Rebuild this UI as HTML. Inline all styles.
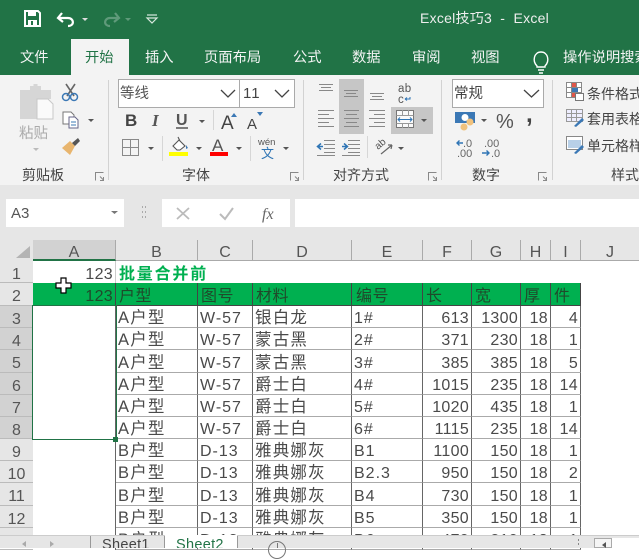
<!DOCTYPE html>
<html><head><meta charset="utf-8">
<style>
html,body{margin:0;padding:0}
body{width:639px;height:548px;overflow:hidden;position:relative;background:#fff;font-family:"Liberation Sans","Noto Sans CJK SC",sans-serif;color:#444}
.a{position:absolute}
.t{position:absolute;white-space:nowrap;line-height:18px}
.tab{top:49px;color:#f4f4f4;font-size:14.3px}
.lb{top:166px;font-size:14px;color:#444}
.s{font-size:14px;color:#444;left:587px}
table{border-collapse:separate;border-spacing:0;table-layout:fixed;position:absolute;left:33px;top:261px;width:606px;font-size:16.5px;color:#4a4a4a}
td{box-sizing:border-box;padding:4px 0 0 2px;border-right:1px solid #666;border-bottom:1px solid #aaa;white-space:nowrap;overflow:hidden;line-height:17px;letter-spacing:1.2px}
td.n{text-align:right;padding-right:2px;letter-spacing:.3px;font-size:16px}
td.l{letter-spacing:1px;font-size:16px}
td.e{border:0;padding:0}
td.x{border-right:0;border-bottom:0}
tr.g td.c{background:#00b050;border-color:#444;color:#1f4a2b;letter-spacing:.5px;font-size:16px;padding-left:3px}
.rh{position:absolute;left:0;width:33px;text-align:center;font-size:16px;color:#555;box-sizing:border-box;border-bottom:1px solid #bbb;line-height:27px;overflow:hidden}
.ch{position:absolute;top:240px;height:21px;text-align:center;font-size:16px;color:#555;line-height:26px;box-sizing:border-box;border-right:1px solid #aaa;border-bottom:1px solid #aaa;overflow:hidden}
</style></head><body>

<div class="a" style="left:0;top:0;width:639px;height:75px;background:#217346"></div>
<div class="a" style="left:71px;top:39px;width:58px;height:36px;background:#f3f3f3"></div>
<div class="a" style="left:0;top:75px;width:639px;height:110px;background:#f3f3f3"></div>
<div class="a" style="left:0;top:185px;width:639px;height:76px;background:#e6e6e6"></div>

<div class="t" style="left:420px;top:9px;color:#eee;font-size:14px;letter-spacing:.25px">Excel技巧3&nbsp; -&nbsp; Excel</div>
<div class="t tab" style="left:20px">文件</div>
<div class="t tab" style="left:85px;color:#217346">开始</div>
<div class="t tab" style="left:145px">插入</div>
<div class="t tab" style="left:204px">页面布局</div>
<div class="t tab" style="left:293px">公式</div>
<div class="t tab" style="left:352px">数据</div>
<div class="t tab" style="left:412px">审阅</div>
<div class="t tab" style="left:471px">视图</div>
<div class="t tab" style="left:563px">操作说明搜索</div>

<!-- boxes -->
<div class="a" style="left:118px;top:79px;width:120px;height:27px;background:#fff;border:1px solid #aaa"></div>
<div class="a" style="left:239px;top:79px;width:54px;height:27px;background:#fff;border:1px solid #aaa"></div>
<div class="a" style="left:452px;top:79px;width:90px;height:27px;background:#fff;border:1px solid #aaa"></div>
<div class="a" style="left:339px;top:79px;width:25px;height:55px;background:#c6c6c6"></div>
<div class="a" style="left:391px;top:107px;width:42px;height:27px;background:#c6c6c6"></div>
<div class="t" style="left:120px;top:85px;font-size:14.5px;color:#555">等线</div>
<div class="t" style="left:243px;top:85px;font-size:15px;color:#444;letter-spacing:1px">11</div>
<div class="t" style="left:454px;top:85px;font-size:14.5px;color:#444">常规</div>

<svg class="a" style="left:0;top:0" width="639" height="262" viewBox="0 0 639 262">
<!-- QAT -->
<path d="M25 11h13l2 2v13H25z" fill="none" stroke="#fff" stroke-width="2"/><path d="M28 11h8v5h-8zM28 20h9v6h-9z" fill="#fff"/><path d="M31 21v4h2v-4z" fill="#217346"/>
<path d="M62 13l-4 5 5 4M59 18h9c6 0 7 8 0 8" fill="none" stroke="#fff" stroke-width="2.2"/><path d="M82 18h6l-3 3z" fill="#ddd"/>
<path d="M115 13l4 5-5 4M118 18h-8c-6 0-7 8 0 8" fill="none" stroke="#5f9a7a" stroke-width="2.2"/><path d="M125 18h6l-3 3z" fill="#5f9a7a"/>
<path d="M147 15h10" stroke="#d8e8de" stroke-width="1.2"/><path d="M147 18h10l-5 5z" fill="none" stroke="#d8e8de" stroke-width="1.2"/>
<!-- bulb -->
<path d="M537 66c-5-5-3-14 4-14s9 9 4 14v1h-8zM538 70h6M539 73h4" fill="none" stroke="#fff" stroke-width="1.4"/>
<!-- separators -->
<path d="M108.500 80v100M303.500 80v100M441.500 80v100M552.500 80v100" stroke="#d2d2d2"/>
<path d="M213.500 110v20M162.500 136v25M250.500 136v25M367.500 136v22" stroke="#d6d6d6"/>
<!-- clipboard -->
<path d="M20 90h10v-4h3.500v-2h4v2H41v4h10v9H37v20H20z" fill="#d6d6d6"/>
<path d="M37 99h11l5 5v15H37z" fill="#fafafa" stroke="#c8c8c8"/>
<text x="19" y="138" font-size="14.500" fill="#aaa">粘贴</text>
<path d="M33 148h6l-3 3z" fill="#bbb"/>
<!-- scissors -->
<path d="M66 84l8 12M75 84l-8 12" stroke="#666" stroke-width="1.600"/>
<circle cx="66" cy="97" r="3.500" fill="none" stroke="#3b78b5" stroke-width="1.500"/><circle cx="74" cy="97" r="3.500" fill="none" stroke="#3b78b5" stroke-width="1.500"/>
<!-- copy -->
<path d="M63 112h8l3 3v9H63z" fill="#fff" stroke="#777"/><path d="M69 117h6l3 3v8h-9z" fill="#fff" stroke="#668"/><path d="M71 122h5M71 125h5" stroke="#3b78b5"/>
<path d="M88 119h6l-3 3z" fill="#555"/>
<!-- brush -->
<path d="M62 148l8-7 5 5-5 9z" fill="#e8b56e"/><path d="M72 143l6-5 2 3-5 5z" fill="#555"/>
<!-- font -->
<path d="M221 90l7 7 7-7M275 90l7 7 7-7M524 90l7.500 7 7.500-7" fill="none" stroke="#444" stroke-width="1.300"/>
<text x="125" y="126" font-size="17" font-weight="bold" fill="#444">B</text>
<text x="152" y="126" font-size="17" font-style="italic" font-family="Liberation Serif" font-weight="bold" fill="#555">I</text>
<text x="176" y="125" font-size="16" font-weight="bold" fill="#555">U</text><path d="M176 128h12" stroke="#555" stroke-width="1.500"/>
<path d="M199 120h6l-3 3zM148 147h6l-3 3zM196 147h6l-3 3zM236 147h6l-3 3zM283 147h6l-3 3zM421 119h6l-3 3zM481 119h6l-3 3zM398 147h6l-3 3z" fill="#555"/>
<text x="221" y="129" font-size="19" fill="#444">A</text><path d="M231 117h6l-3-4z" fill="#3b78b5"/>
<text x="247" y="129" font-size="15" fill="#444">A</text><path d="M257 112h6l-3 4z" fill="#3b78b5"/>
<path d="M122.500 139.500h16v16h-16zM130.500 139.500v16M122.500 147.500h16" fill="none" stroke="#888"/>
<path d="M173 146l6-6 6 6-5 4h-3zM178 137l2 4" fill="#fff" stroke="#555" stroke-width="1.100"/><path d="M186 145l2 3-2 1z" fill="#3b78b5"/>
<rect x="169" y="152" width="19" height="4" fill="#ff0"/>
<text x="212" y="151" font-size="17" fill="#555">A</text><rect x="210" y="152" width="18" height="4" fill="#f00"/>
<text x="258" y="145" font-size="9.500" fill="#555">wén</text><text x="261" y="158" font-size="13" fill="#2f75b5">文</text>
<!-- align -->
<g stroke="#888" fill="none">
<path d="M319 84.500h14M321 87.500h10M319 90.500h14M344 90.500h14M346 93.500h10M344 96.500h14M370 93.500h14M372 96.500h10M370 99.500h14"/>
<path d="M318 110.500h16M318 114.500h11M318 118.500h16M318 122.500h11M318 126.500h16M344 110.500h15M346 114.500h11M344 118.500h15M346 122.500h11M344 126.500h15M369 110.500h16M374 114.500h11M369 118.500h16M374 122.500h11M369 126.500h16"/>
<path d="M324 140.500h11M324 144.500h11M324 148.500h11M324 152.500h11M348 140.500h12M348 144.500h12M348 148.500h12M348 152.500h12M317 155.500h18M342 155.500h18" />
</g>
<path d="M323 146.500h-5M321 143.500l-3.500 3 3.500 3" fill="none" stroke="#2f75b5" stroke-width="1.500"/>
<path d="M342 146.500h5M344 143.500l3.500 3-3.500 3" fill="none" stroke="#2f75b5" stroke-width="1.500"/>
<text x="398" y="92" font-size="11.500" fill="#555" letter-spacing=".4">ab</text><text x="398" y="103" font-size="11.500" fill="#555">c</text><path d="M405 99h5v-2M405 99l2-1.500M405 99l2 1.500" fill="none" stroke="#2f75b5"/>
<rect x="396.500" y="110.500" width="17" height="17" fill="#fafafa" stroke="#777"/><path d="M396.500 115.500h17M396.500 123.500h17M402.500 110v5M408.500 110v5M402.500 124v4M408.500 124v4" stroke="#999"/><path d="M398 119.500h14M400 117.500l-2 2 2 2M410 117.500l2 2-2 2" fill="none" stroke="#2f75b5"/>
<text x="378" y="150" font-size="10" fill="#555" transform="rotate(-40 378 150)">ab</text><path d="M381 154l11-9M392 145l-4 0M392 145l-1 4" fill="none" stroke="#666" stroke-width="1.200"/>
<!-- number -->
<rect x="455" y="112" width="20" height="11" fill="#3b78b5"/><circle cx="465" cy="117.500" r="3.500" fill="#fff"/>
<circle cx="470" cy="122" r="3.500" fill="#f1c27d"/><circle cx="464" cy="127" r="3.500" fill="#f1c27d"/>
<text x="496" y="128" font-size="20" fill="#555">%</text>
<text x="526" y="122" font-size="24" font-weight="bold" fill="#444">,</text>
<text x="463" y="147" font-size="11" fill="#666">.0</text><text x="457" y="157" font-size="11" fill="#666">.00</text><path d="M457 143h6M459.500 140.500l-2.500 2.500 2.500 2.500" fill="none" stroke="#2f75b5" stroke-width="1.400"/>
<text x="484" y="147" font-size="11" fill="#666">.00</text><text x="491" y="157" font-size="11" fill="#666">.0</text><path d="M482 153h7M486.500 150.500l2.500 2.500-2.500 2.500" fill="none" stroke="#2f75b5" stroke-width="1.400"/>
<!-- styles -->
<path d="M566.500 82.500h15v15h-15zM571.500 82.500v15M576.500 82.500v15M566.500 87.500h15M566.500 92.500h15" fill="#fff" stroke="#888"/><rect x="572" y="83" width="4" height="4" fill="#e0574a"/><rect x="572" y="88" width="6" height="4" fill="#3b78b5"/><rect x="572" y="93" width="4" height="4" fill="#e0574a"/><rect x="575.500" y="93.500" width="8" height="7" fill="#fff" stroke="#777"/>
<path d="M566.500 109.500h16v12h-16zM566.500 113.500h16M566.500 117.500h16M571.500 109.500v12M576.500 109.500v12" fill="#eef" stroke="#999"/><path d="M574 126l8-8 2 2-8 7z" fill="#3b78b5"/>
<path d="M566.500 136.500h16v13h-16z" fill="#fff" stroke="#888"/><rect x="568" y="140" width="13" height="8" fill="#b8d0e8"/><path d="M574 153l8-8 2 2-8 7z" fill="#3b78b5"/>
<!-- launchers -->
<g fill="none" stroke="#888"><path d="M95.500 180.500v-8h8M100 176.500l3.500 3.500M103.500 177v3.500h-3.500"/><path d="M290.500 180.500v-8h8M295 176.500l3.500 3.500M298.500 177v3.500h-3.500"/><path d="M428.500 180.500v-8h8M433 176.500l3.500 3.500M436.500 177v3.500h-3.500"/><path d="M538.500 180.500v-8h8M543 176.500l3.500 3.500M546.500 177v3.500h-3.500"/></g>
<!-- formula -->
<rect x="6" y="199" width="118" height="28" fill="#fff"/><rect x="162" y="199" width="128" height="28" fill="#fff"/><rect x="295" y="199" width="344" height="28" fill="#fff"/>
<path d="M111 211h7l-3.500 3z" fill="#777"/>
<path d="M142.500 206v2M142.500 211v2M142.500 216v2M145.500 206v2M145.500 211v2M145.500 216v2" stroke="#aaa"/>
<path d="M177 208l12 11M189 208l-12 11" stroke="#bbb" stroke-width="1.800"/>
<path d="M220 214l5 5 8-11" fill="none" stroke="#bbb" stroke-width="2"/>
<text x="262" y="219" font-size="16" font-style="italic" font-family="Liberation Serif" fill="#666">fx</text>
<text x="11" y="218" font-size="15" fill="#555">A3</text>
</svg>

<div class="t lb" style="left:22px">剪贴板</div>
<div class="t lb" style="left:182px">字体</div>
<div class="t lb" style="left:333px">对齐方式</div>
<div class="t lb" style="left:472px">数字</div>
<div class="t lb" style="left:611px">样式</div>
<div class="t s" style="top:85px">条件格式</div>
<div class="t s" style="top:110px">套用表格</div>
<div class="t s" style="top:137px">单元格样</div>

<!-- col headers -->
<div class="ch" style="left:33px;width:83px;background:#d2d2d2;border-bottom:2px solid #217346">A</div>
<div class="ch" style="left:116px;width:82px">B</div>
<div class="ch" style="left:198px;width:55px">C</div>
<div class="ch" style="left:253px;width:99px">D</div>
<div class="ch" style="left:352px;width:71px">E</div>
<div class="ch" style="left:423px;width:49px">F</div>
<div class="ch" style="left:472px;width:49px">G</div>
<div class="ch" style="left:521px;width:30px">H</div>
<div class="ch" style="left:551px;width:30px">I</div>
<div class="ch" style="left:581px;width:58px;border-right:0">J</div>
<svg class="a" style="left:0;top:240px" width="33" height="21"><path d="M30 6v12H16z" fill="#b4b4b4"/></svg>

<!-- row headers -->
<div class="a" style="left:0;top:261px;width:33px;height:274px;background:#e6e6e6"></div>
<div class="a" style="left:0;top:306px;width:33px;height:133px;background:#d2d2d2"></div>
<div class="rh" style="top:261px;height:22px">1</div>
<div class="rh" style="top:283px;height:23px">2</div>
<div class="rh" style="top:306px;height:22px">3</div>
<div class="rh" style="top:328px;height:22px">4</div>
<div class="rh" style="top:350px;height:23px">5</div>
<div class="rh" style="top:373px;height:22px">6</div>
<div class="rh" style="top:395px;height:22px">7</div>
<div class="rh" style="top:417px;height:22px">8</div>
<div class="rh" style="top:439px;height:22px">9</div>
<div class="rh" style="top:461px;height:22px">10</div>
<div class="rh" style="top:483px;height:23px">11</div>
<div class="rh" style="top:506px;height:22px">12</div>
<div class="rh" style="top:528px;height:22px">13</div>

<table>
<colgroup><col style="width:83px"><col style="width:82px"><col style="width:55px"><col style="width:99px"><col style="width:71px"><col style="width:49px"><col style="width:49px"><col style="width:30px"><col style="width:30px"><col style="width:58px"></colgroup>
<tr style="height:22px"><td class="n" style="border-bottom:0;border-right:1px solid #ccc">123</td><td colspan="4" class="x" style="color:#00b050;font-weight:bold;font-size:16px;letter-spacing:1.8px;padding-left:3px">批量合并前</td><td class="e" colspan="5"></td></tr>
<tr class="g" style="height:23px"><td class="c n" style="letter-spacing:.3px;padding-left:0">123</td><td class="c">户型</td><td class="c">图号</td><td class="c">材料</td><td class="c" style="padding-left:4px">编号</td><td class="c">长</td><td class="c">宽</td><td class="c">厚</td><td class="c">件</td><td class="e"></td></tr>
<tr style="height:22px"><td class="e" style="border-right:1px solid #666"></td><td>A户型</td><td class="l">W-57</td><td>银白龙</td><td class="l">1#</td><td class="n">613</td><td class="n">1300</td><td class="n">18</td><td class="n">4</td><td class="e"></td></tr>
<tr style="height:22px"><td class="e" style="border-right:1px solid #666"></td><td>A户型</td><td class="l">W-57</td><td>蒙古黑</td><td class="l">2#</td><td class="n">371</td><td class="n">230</td><td class="n">18</td><td class="n">1</td><td class="e"></td></tr>
<tr style="height:23px"><td class="e" style="border-right:1px solid #666"></td><td>A户型</td><td class="l">W-57</td><td>蒙古黑</td><td class="l">3#</td><td class="n">385</td><td class="n">385</td><td class="n">18</td><td class="n">5</td><td class="e"></td></tr>
<tr style="height:22px"><td class="e" style="border-right:1px solid #666"></td><td>A户型</td><td class="l">W-57</td><td>爵士白</td><td class="l">4#</td><td class="n">1015</td><td class="n">235</td><td class="n">18</td><td class="n">14</td><td class="e"></td></tr>
<tr style="height:22px"><td class="e" style="border-right:1px solid #666"></td><td>A户型</td><td class="l">W-57</td><td>爵士白</td><td class="l">5#</td><td class="n">1020</td><td class="n">435</td><td class="n">18</td><td class="n">1</td><td class="e"></td></tr>
<tr style="height:22px"><td class="e" style="border-right:1px solid #666"></td><td>A户型</td><td class="l">W-57</td><td>爵士白</td><td class="l">6#</td><td class="n">1115</td><td class="n">235</td><td class="n">18</td><td class="n">14</td><td class="e"></td></tr>
<tr style="height:22px"><td class="e" style="border-right:1px solid #666"></td><td>B户型</td><td class="l">D-13</td><td>雅典娜灰</td><td class="l">B1</td><td class="n">1100</td><td class="n">150</td><td class="n">18</td><td class="n">1</td><td class="e"></td></tr>
<tr style="height:22px"><td class="e" style="border-right:1px solid #666"></td><td>B户型</td><td class="l">D-13</td><td>雅典娜灰</td><td class="l">B2.3</td><td class="n">950</td><td class="n">150</td><td class="n">18</td><td class="n">2</td><td class="e"></td></tr>
<tr style="height:23px"><td class="e" style="border-right:1px solid #666"></td><td>B户型</td><td class="l">D-13</td><td>雅典娜灰</td><td class="l">B4</td><td class="n">730</td><td class="n">150</td><td class="n">18</td><td class="n">1</td><td class="e"></td></tr>
<tr style="height:22px"><td class="e" style="border-right:1px solid #666"></td><td>B户型</td><td class="l">D-13</td><td>雅典娜灰</td><td class="l">B5</td><td class="n">350</td><td class="n">150</td><td class="n">18</td><td class="n">1</td><td class="e"></td></tr>
<tr style="height:22px"><td class="e" style="border-right:1px solid #666"></td><td>B户型</td><td class="l">D-13</td><td>雅典娜灰</td><td class="l">B6</td><td class="n">470</td><td class="n">210</td><td class="n">18</td><td class="n">1</td><td class="e"></td></tr>
</table>

<!-- selection -->
<div class="a" style="left:32px;top:305px;width:83px;height:133px;border:1px solid #217346"></div>
<div class="a" style="left:113px;top:437px;width:5px;height:5px;background:#217346"></div>

<!-- cursor -->
<svg class="a" style="left:54px;top:276px" width="20" height="20" viewBox="0 0 20 20"><path d="M7 2h5v5h5v5h-5v5H7v-5H2V7h5z" fill="#fff" stroke="#000" stroke-width="1.200"/></svg>

<!-- sheet tabs -->
<div class="a" style="left:0;top:535px;width:639px;height:13px;background:#e6e6e6;border-top:1px solid #ccc;box-sizing:border-box"></div>
<div class="a" style="left:165px;top:535px;width:72px;height:13px;background:#fff"></div>
<div class="a" style="left:90px;top:536px;width:1px;height:12px;background:#999"></div>
<div class="a" style="left:164px;top:536px;width:1px;height:12px;background:#999"></div>
<div class="a" style="left:237px;top:536px;width:1px;height:12px;background:#999"></div>
<div class="t" style="left:102px;top:536px;font-size:14.500px;color:#444;height:12px;overflow:hidden;letter-spacing:.3px">Sheet1</div>
<div class="t" style="left:176px;top:536px;font-size:14.500px;color:#217346;height:12px;overflow:hidden;letter-spacing:.3px">Sheet2</div>
<div class="a" style="left:268px;top:541px;width:18px;height:18px;border:1px solid #777;border-radius:50%;box-sizing:border-box"></div>
<div class="a" style="left:277px;top:543px;width:1px;height:5px;background:#777"></div>
<div class="a" style="left:594px;top:538px;width:45px;height:10px;background:#fff"></div>
<div class="a" style="left:594px;top:538px;width:18px;height:10px;background:#f5f5f5;border:1px solid #aaa;box-sizing:border-box"></div>
<svg class="a" style="left:0;top:535px" width="639" height="13"><path d="M26 6l-4 3 4 3zM50 6l4 3-4 3z" fill="#aaa"/><path d="M606 7l-4 3 4 3z" fill="#555"/><path d="M578.500 4v2M578.500 8v2" stroke="#888"/></svg>
</body></html>
